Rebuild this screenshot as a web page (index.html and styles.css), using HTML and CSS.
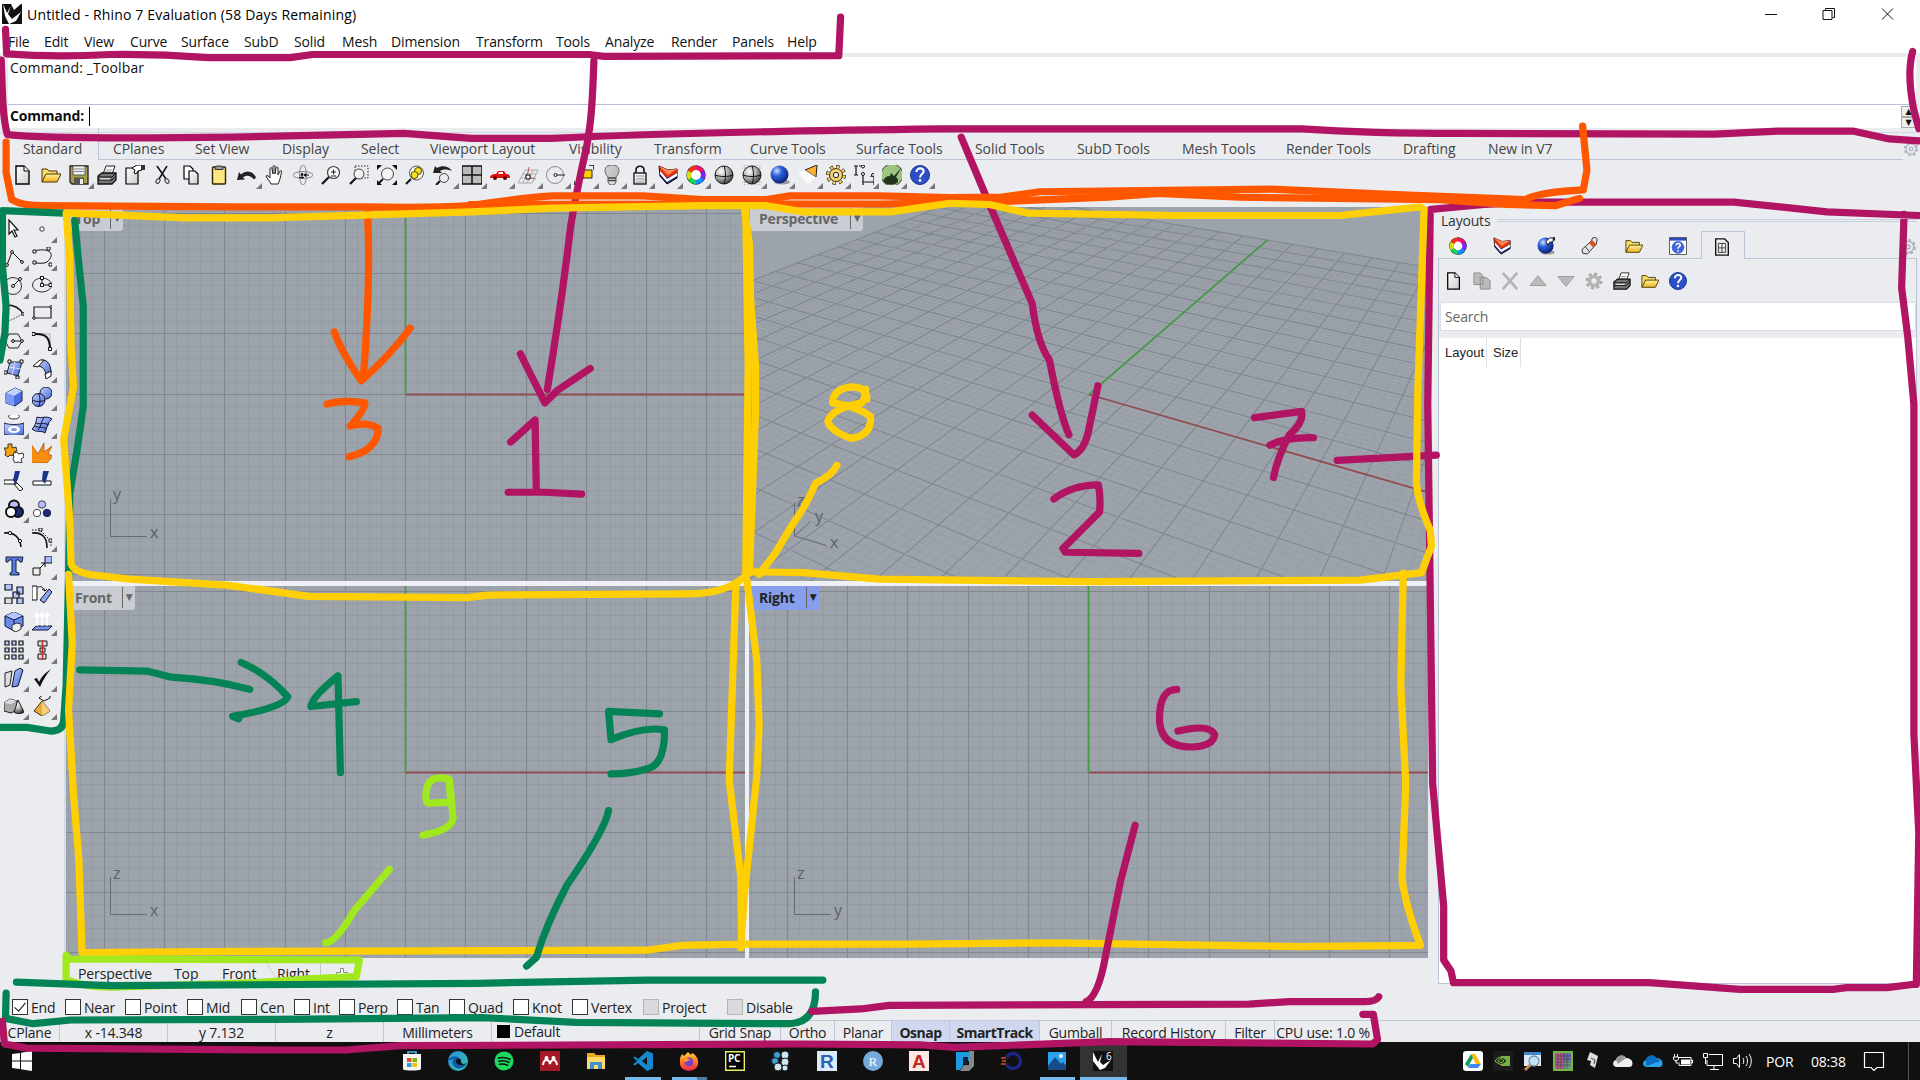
FILE: index.html
```html
<!DOCTYPE html>
<html lang="en">
<head>
<meta charset="utf-8">
<title>Untitled - Rhino 7 Evaluation</title>
<link rel="stylesheet" href="styles.css">
</head>
<body>
<svg class="defs" width="0" height="0">
<defs>
<linearGradient id="gy" x1="0" y1="0" x2="0" y2="1"><stop offset="0" stop-color="#fff0a0"/><stop offset="1" stop-color="#f0b020"/></linearGradient>
<linearGradient id="gb" x1="0" y1="0" x2="1" y2="1"><stop offset="0" stop-color="#c3d2ff"/><stop offset="1" stop-color="#4668d8"/></linearGradient>
<linearGradient id="gw" x1="0" y1="0" x2="1" y2="1"><stop offset="0" stop-color="#fff"/><stop offset="1" stop-color="#ccc"/></linearGradient>
<radialGradient id="gs" cx=".35" cy=".3" r=".8"><stop offset="0" stop-color="#fff"/><stop offset=".5" stop-color="#aaa"/><stop offset="1" stop-color="#222"/></radialGradient>
<radialGradient id="gbl" cx=".35" cy=".3" r=".8"><stop offset="0" stop-color="#cfe0ff"/><stop offset=".35" stop-color="#2f62dd"/><stop offset="1" stop-color="#04145e"/></radialGradient>
<linearGradient id="ff" x1="0" y1="0" x2="0" y2="1"><stop offset="0" stop-color="#ffd33c"/><stop offset=".5" stop-color="#ff7a1e"/><stop offset="1" stop-color="#f0254e"/></linearGradient>
<linearGradient id="edge" x1="0" y1="0" x2="1" y2="1"><stop offset="0" stop-color="#2b8de0"/><stop offset="1" stop-color="#35c7a5"/></linearGradient>
</defs>
<symbol id="new" viewBox="0 0 20 20"><path d="M3 1h8l5 5v13H3z" fill="url(#gw)" stroke="#000" stroke-width="1.4"/><path d="M11 1v5h5" fill="#fff" stroke="#000"/></symbol>
<symbol id="open" viewBox="0 0 20 20"><path d="M1 17V4h5l2 2h8v3" fill="#f6dc6a" stroke="#4a3500"/><path d="M1 17l4-8h15l-4 8z" fill="url(#gy)" stroke="#4a3500"/></symbol>
<symbol id="save" viewBox="0 0 20 20"><path d="M1 1h18v18H3l-2-2z" fill="#aba04a" stroke="#222" stroke-width="1.3"/><path d="M4 1h12v9H4z" fill="#eef0f2" stroke="#444" stroke-width=".8"/><path d="M5 4h10M5 6.500h10" stroke="#889"/><path d="M5 12.500h10V19H5z" fill="#555"/><path d="M11 14h3v5h-3z" fill="#eee"/></symbol>
<symbol id="print" viewBox="0 0 20 20"><path d="M6 9l3-8h9l-3 8z" fill="#fff" stroke="#222"/><path d="M9 5h6M8 7h6" stroke="#999"/><path d="M1 11l4-3h14v7l-4 4H1z" fill="#777" stroke="#111" stroke-width="1.300"/><path d="M1 12h14l4-4M1 15h14l4-4" stroke="#111" fill="none"/><path d="M3 13h10v1.500H3z" fill="#ddd"/></symbol>
<symbol id="note" viewBox="0 0 20 20"><path d="M1 3h12v16H1z" fill="url(#gw)" stroke="#000" stroke-width="1.200"/><path d="M7 3l5-3h5v5l-4 1-2 3-2-1 1-3z" fill="#fff" stroke="#000"/><path d="M16-1h4v6h-4z" fill="#333"/></symbol>
<symbol id="cut" viewBox="0 0 20 20"><path d="M4 1l9 13M14 1L6 14" stroke="#111" stroke-width="1.500"/><ellipse cx="5" cy="16" rx="1.800" ry="2.500" transform="rotate(35 5 16)" fill="none" stroke="#333"/><ellipse cx="14" cy="16" rx="1.800" ry="2.500" transform="rotate(-35 14 16)" fill="none" stroke="#333"/></symbol>
<symbol id="copy" viewBox="0 0 20 20"><path d="M3 1h6l3 3v10H3z" fill="#fff" stroke="#000" stroke-width="1.200"/><path d="M8 6h6l3 3v10H8z" fill="url(#gw)" stroke="#000" stroke-width="1.200"/></symbol>
<symbol id="paste" viewBox="0 0 20 20"><rect x="3.500" y="2" width="13" height="17" rx="1" fill="#ffe680" stroke="#2b2400" stroke-width="1.400"/><path d="M6 4.500V2l2-1h4l2 1v2.500z" fill="#999" stroke="#333"/></symbol>
<symbol id="undo" viewBox="0 0 20 20"><path d="M0 15l2-8 2 2.500c5-5 12-4 15 3l-2 2c-3-4-8-5-11-2l2 2z" fill="#222"/></symbol>
<symbol id="hand" viewBox="0 0 20 20"><path d="M6 19c-1-3-4-5-5-8 1-1 3 0 4 2V4c0-2 2-2 2 0l1 5V2c0-2 2-2 2 0v7l1-6c0-2 2-1 2 0v7l2-4c1-1 2 0 1.500 1-1 5-1.500 8-3.500 12z" fill="#fff" stroke="#222"/></symbol>
<symbol id="rot" viewBox="0 0 20 20"><ellipse cx="10" cy="10" rx="10" ry="3.500" fill="none" stroke="#888"/><ellipse cx="10" cy="10" rx="3.500" ry="10" fill="none" stroke="#888"/><path d="M9 8v6M6 12.500h5M12 10h4" stroke="#111"/><path d="M11 10.500l-2-3-2 3zM13 8v4l-3-2z" fill="#111"/></symbol>
<symbol id="zoom" viewBox="0 0 20 20"><circle cx="12.500" cy="7.500" r="6" fill="#f7f7f7" stroke="#444" stroke-width="1.200"/><path d="M8 12l-7 7" stroke="#111" stroke-width="2.200"/><path d="M10 7h5M12.500 4.500v5M10 11h5" stroke="#222"/></symbol>
<symbol id="zoomw" viewBox="0 0 20 20"><path d="M6 1h13v12H6z" fill="none" stroke="#222" stroke-dasharray="1.500 1.500"/><circle cx="10" cy="9" r="5" fill="#f4f4f4" stroke="#444"/><path d="M7 13l-6 6" stroke="#111" stroke-width="2.200"/></symbol>
<symbol id="zoome" viewBox="0 0 20 20"><circle cx="10.500" cy="9" r="6" fill="#f4f4f4" stroke="#444"/><path d="M6 14l-4 4" stroke="#111" stroke-width="2"/><path d="M0 0h5L0 5zM20 0h-5l5 5zM0 20v-5l5 5zM20 20v-5l-5 5z" fill="#111"/></symbol>
<symbol id="zooms" viewBox="0 0 20 20"><circle cx="11.500" cy="8" r="7" fill="#f4f4f4" stroke="#555"/><path d="M6 14l-5 5" stroke="#111" stroke-width="2"/><circle cx="13" cy="6" r="3.500" fill="#f8df20" stroke="#554800"/><circle cx="9.500" cy="10" r="3.500" fill="#f8df20" stroke="#554800"/></symbol>
<symbol id="zoomu" viewBox="0 0 20 20"><circle cx="11" cy="13" r="4.500" fill="none" stroke="#444"/><path d="M7 16l-4 4" stroke="#111" stroke-width="2"/><path d="M0 8l2-7 2 2c5-3 12-2 15 3-5-2-9-2-12 0l2 2z" fill="#222"/></symbol>
<symbol id="four" viewBox="0 0 20 20"><path d="M0 1h20v18H0z" fill="#bbb" stroke="#111" stroke-width="1.500"/><path d="M10 1v18M0 10h20" stroke="#111" stroke-width="1.500"/></symbol>
<symbol id="car" viewBox="0 0 20 20"><path d="M0 13c0-3 2-4 6-4l2-3h6l2 3c3 0 4 1 4 4z" fill="#e01010"/><path d="M9 7h4v2H8z" fill="#fff"/><circle cx="5" cy="13" r="2" fill="#600"/><circle cx="15" cy="13" r="2" fill="#600"/></symbol>
<symbol id="cpl" viewBox="0 0 20 20"><path d="M7 5h13l-6 13H0zM11 5L5 18M15 5l-6 13M5 9h13M3 13h13" fill="none" stroke="#999" stroke-width=".8"/><path d="M9 12l2-10M9 12l9 2" stroke="#b66"/><path d="M8 10h4v4H8z" fill="#fff" stroke="#000"/></symbol>
<symbol id="circ" viewBox="0 0 20 20"><circle cx="9" cy="10" r="8.500" fill="none" stroke="#888"/><path d="M11 10h8" stroke="#222"/><circle cx="9.500" cy="10" r="1.500" fill="#fff" stroke="#111"/></symbol>
<symbol id="sel" viewBox="0 0 20 20"><path d="M9 5h9v8H9z" fill="#ffd000" stroke="#222"/><path d="M15 0h5v5M0 16v4h4" fill="none" stroke="#111" stroke-width="1.500"/></symbol>
<symbol id="bulb" viewBox="0 0 20 20"><path d="M10 0c9 0 8 8 4 12v5l-2 3H8l-2-3v-5C2 8 1 0 10 0z" fill="url(#gw)" stroke="#555"/><path d="M10 0c9 0 8 8 4 12H6C2 8 1 0 10 0z" fill="#999" opacity=".45"/><path d="M6 13h8M6 15.500h8" stroke="#444" stroke-width="1.400"/></symbol>
<symbol id="lock" viewBox="0 0 20 20"><path d="M6 9V5c0-5 8-5 8 0v4" fill="none" stroke="#111" stroke-width="1.600"/><rect x="4" y="8" width="12" height="11" fill="url(#gw)" stroke="#111" stroke-width="1.300"/><path d="M6 11h8M6 14h8M6 17h8" stroke="#999"/></symbol>
<symbol id="layer" viewBox="0 0 20 20"><path d="M1 1l9 4 9-1v9l-10 6-7-8z" fill="#122a8c" stroke="#100"/><path d="M2 5l7 9 10-6v3l-10 6-7-8z" fill="#fff"/><path d="M1 1l9 4 9-1v4l-10 5-7-7z" fill="#e8320e"/><path d="M1 1l9 4 9-1-9 6z" fill="#ff8a5c"/></symbol>
<symbol id="wheel" viewBox="0 0 20 20"><circle cx="10" cy="10" r="9.700" fill="#222"/><g fill="none" stroke-width="4.500"><path d="M10 3a7 7 0 0 1 6 3.500" stroke="#f81070"/><path d="M16 6.500a7 7 0 0 1 0 7" stroke="#8020ff"/><path d="M16 13.500a7 7 0 0 1-6 3.500" stroke="#1090ff"/><path d="M10 17a7 7 0 0 1-6-3.500" stroke="#10d850"/><path d="M4 13.500a7 7 0 0 1 0-7" stroke="#d8e010"/><path d="M4 6.500a7 7 0 0 1 6-3.500" stroke="#ff3010"/></g><circle cx="10" cy="10" r="4.900" fill="#fff"/></symbol>
<symbol id="ball" viewBox="0 0 20 20"><circle cx="10" cy="10" r="9" fill="url(#gs)" stroke="#222"/><path d="M1 10c5 2 13 2 18 0M10 1c2 5 2 13 0 18" stroke="#111" fill="none"/></symbol>
<symbol id="ballg" viewBox="0 0 20 20"><path d="M-1 0h22M-1 3h22M-1 17h22M-1 20h22" stroke="#aaa" stroke-width="1.500" stroke-dasharray="1.500 1.500"/><use href="#ball"/></symbol>
<symbol id="bball" viewBox="0 0 20 20"><ellipse cx="12" cy="17" rx="8" ry="2.500" fill="#999"/><circle cx="9.500" cy="9.500" r="9" fill="url(#gbl)"/></symbol>
<symbol id="bbrush" viewBox="0 0 20 20"><use href="#bball"/><path d="M10 5l4-4h4v4l-4 1-2 3z" fill="#fff" stroke="#111"/><path d="M18-1h3v5h-3z" fill="#222"/></symbol>
<symbol id="spot" viewBox="0 0 20 20"><path d="M7 5L19 0l-1 12z" fill="#ffb030" stroke="#222"/><path d="M0 8l7-3 11 7-8 8z" fill="#fff" opacity=".75"/></symbol>
<symbol id="gear" viewBox="0 0 20 20"><circle cx="10" cy="10" r="8" fill="none" stroke="#3a2a00" stroke-width="4" stroke-dasharray="3.300 2.980"/><circle cx="10" cy="10" r="6.500" fill="#f3d377" stroke="#3a2a00"/><circle cx="10" cy="10" r="8" fill="none" stroke="#f3d377" stroke-width="2.500" stroke-dasharray="2.300 3.980" stroke-dashoffset="-.5"/><circle cx="10" cy="10" r="2.700" fill="#eee" stroke="#222"/></symbol>
<symbol id="dim" viewBox="0 0 20 20"><path d="M2 1v9M0 1h4M0 10h4M5 1h6M17 11v1M9 9v11M9 17h11M20 12v8" fill="none" stroke="#111" stroke-width="1.200"/><circle cx="9" cy="1.500" r="1.500" fill="#fff" stroke="#111"/><circle cx="9" cy="9" r="1.500" fill="#fff" stroke="#111"/><circle cx="19" cy="10" r="1.500" fill="#fff" stroke="#111"/></symbol>
<symbol id="gh" viewBox="0 0 20 20"><circle cx="10" cy="10" r="11" fill="#9cc482" stroke="#444"/><path d="M1 16c2-4 4-5 7-5l1-3 3 3 8-9-6 10c2 2 3 4 1 6-5 3-11 2-14-2z" fill="#24351d"/></symbol>
<symbol id="help" viewBox="0 0 20 20"><circle cx="10" cy="10" r="9.500" fill="#2c50c4" stroke="#1b348d"/><path d="M6.500 7c0-5 8-4.500 7 0-.5 2-3.500 2.500-3.500 5.500" fill="none" stroke="#fff" stroke-width="2.200"/><circle cx="10" cy="15.500" r="1.400" fill="#fff"/></symbol>
<symbol id="cog" viewBox="0 0 20 20"><circle cx="10" cy="10" r="8" fill="none" stroke="#aaa" stroke-width="3" stroke-dasharray="3.300 2.980"/><circle cx="10" cy="10" r="5" fill="none" stroke="#b4b4b4" stroke-width="4"/></symbol>
<symbol id="cogl" viewBox="0 0 20 20"><circle cx="10" cy="10" r="8" fill="none" stroke="#aab0bd" stroke-width="2" stroke-dasharray="3.300 2.980"/><circle cx="10" cy="10" r="6.300" fill="none" stroke="#aab0bd" stroke-width="1.500"/><circle cx="10" cy="10" r="2.200" fill="none" stroke="#aab0bd" stroke-width="1.500"/></symbol>
<symbol id="brush" viewBox="0 0 20 20"><path d="M2 18l-1-4 10-9 2-4c3-1 5 0 5 2l-1 5-10 11z" fill="#e4e4e4" stroke="#222"/><path d="M9 7l5 5 3-4-5-5z" fill="#d9501c"/><path d="M5 11l4 5" stroke="#333"/></symbol>
<symbol id="hwin" viewBox="0 0 20 20"><path d="M.5.500h19v19H.5z" fill="#fff" stroke="#444"/><path d="M1 1h18v3H1z" fill="#2a4bb8"/><circle cx="10" cy="11.500" r="7" fill="#4166d8"/><path d="M8 9.500c0-3 5-3 4.500 0-.5 1-2.500 1.500-2.500 3.500" fill="none" stroke="#fff" stroke-width="1.700"/><circle cx="10" cy="15.500" r="1" fill="#fff"/></symbol>
<symbol id="lay" viewBox="0 0 20 20"><path d="M3 1h10l4 4v14H3z" fill="#eee" stroke="#111" stroke-width="1.500"/><path d="M6 6h8v10H6zM10 6v10M6 11h8" fill="none" stroke="#333"/></symbol>
<symbol id="gcopy" viewBox="0 0 20 20"><path d="M1 1h7l3 3v10H1zM8 6h7l4 4v9H8z" fill="#bbb" stroke="#888"/></symbol>
<symbol id="gx" viewBox="0 0 20 20"><path d="M2 1l16 18M18 1L2 19" stroke="#b4b4b4" stroke-width="3"/></symbol>
<symbol id="gup" viewBox="0 0 20 20"><path d="M1 15L10 4l9 11z" fill="#bbb" stroke="#999"/></symbol>
<symbol id="gdn" viewBox="0 0 20 20"><path d="M1 5l9 11 9-11z" fill="#bbb" stroke="#999"/></symbol>
<symbol id="arrow" viewBox="0 0 20 20"><path d="M5 1v14l3-3 3 6 2-1-3-6h4z" fill="#fff" stroke="#111" stroke-width="1.200"/></symbol>
<symbol id="pt" viewBox="0 0 20 20"><circle cx="10" cy="10" r="2.200" fill="#fff" stroke="#333"/></symbol>
<symbol id="pl" viewBox="0 0 20 20"><path d="M3 18L8 5l10 10" fill="none" stroke="#111"/><g fill="#fff" stroke="#111"><circle cx="3" cy="18" r="1.400"/><circle cx="8" cy="5" r="1.400"/><circle cx="18" cy="15" r="1.400"/></g></symbol>
<symbol id="crv" viewBox="0 0 20 20"><path d="M2 4c16-4 22 3 13 11-3 2-8 1-13 1" fill="none" stroke="#111"/><path d="M1 3h3v3H1zM1 14h3v3H1zM15 0h3v3h-3zM17 16h3v3h-3z" fill="#fff" stroke="#111"/></symbol>
<symbol id="ci" viewBox="0 0 20 20"><circle cx="9" cy="11" r="8.500" fill="none" stroke="#333"/><path d="M9 11l7-7" stroke="#111"/><circle cx="9" cy="11" r="1.500" fill="#fff" stroke="#111"/><circle cx="16" cy="4" r="1.500" fill="#fff" stroke="#111"/></symbol>
<symbol id="el" viewBox="0 0 20 20"><ellipse cx="10" cy="10" rx="9.500" ry="7" fill="none" stroke="#333"/><path d="M10 3v7h9" fill="none" stroke="#111"/><path d="M8.500 1.500h3v3h-3zM8.500 8.500h3v3h-3zM17 8.500h3v3h-3z" fill="#fff" stroke="#111"/></symbol>
<symbol id="ar" viewBox="0 0 20 20"><path d="M2 2c8 0 14 3 17 9" fill="none" stroke="#111" stroke-width="1.300"/><path d="M19 11L3 19" stroke="#555" stroke-dasharray="2 1"/><circle cx="3" cy="19" r="1.300"/><circle cx="19" cy="11" r="1.400" fill="#fff" stroke="#111"/></symbol>
<symbol id="re" viewBox="0 0 20 20"><path d="M2 4h17v11H2z" fill="none" stroke="#222" stroke-width="1.200"/><circle cx="2" cy="15" r="1.300" fill="#fff" stroke="#111"/><circle cx="19" cy="4" r="1.300" fill="#fff" stroke="#111"/></symbol>
<symbol id="po" viewBox="0 0 20 20"><path d="M1 10l4-7h9l4 7-4 7H5z" fill="none" stroke="#222"/><path d="M10 10h8" stroke="#111"/><circle cx="9" cy="10" r="1.400" fill="#fff" stroke="#111"/><circle cx="18" cy="10" r="1.400" fill="#fff" stroke="#111"/></symbol>
<symbol id="fi" viewBox="0 0 20 20"><path d="M2 3h16v15" fill="none" stroke="#aaa"/><path d="M2 3c12-1 16 4 16 15" fill="none" stroke="#111" stroke-width="2"/><path d="M0 1.500h3v3H0zM16.500 16.500h3v3h-3z" fill="#fff" stroke="#111"/></symbol>
<symbol id="su" viewBox="0 0 20 20"><path d="M6 3h12l-4 14L3 14z" fill="url(#gb)" stroke="#223"/><path d="M11 3L8 16M5 8l12 2" stroke="#dde"/><path d="M4 1h3v3H4zM16 1h3v3h-3zM0 12h3v3H0zM12 17h3v3h-3z" fill="#fff" stroke="#111"/></symbol>
<symbol id="sw" viewBox="0 0 20 20"><path d="M5 7l5-6c6 0 9 5 9 13l-5 4c0-7-3-11-9-11z" fill="url(#gb)" stroke="#111"/><path d="M1 7l7-6h4L6 8zM13 15l6-3v5l-5 3z" fill="#fff" stroke="#111"/></symbol>
<symbol id="box" viewBox="0 0 20 20"><path d="M2 6l9-5 7 3v10l-7 5-9-3z" fill="#4b6ee0" stroke="#224"/><path d="M2 6l9-5 7 3-8 5z" fill="#c4d2ff"/><path d="M2 6l8 3v10l-8-3z" fill="#7f9cf5"/></symbol>
<symbol id="sp2" viewBox="0 0 20 20"><circle cx="14" cy="6" r="6" fill="url(#gb)" stroke="#113"/><circle cx="6.500" cy="13" r="6.500" fill="url(#gb)" stroke="#113"/><path d="M0 13c4 2 9 2 13 0M6.500 6.500c2 4 2 9 0 13" fill="none" stroke="#113"/></symbol>
<symbol id="cy" viewBox="0 0 20 20"><ellipse cx="10" cy="1.500" rx="5.500" ry="2.500" fill="#fff" stroke="#333"/><path d="M0 8c5 2 15 2 20 0v11c-6 2-14 2-20 0z" fill="url(#gb)" stroke="#224"/><ellipse cx="10" cy="14.500" rx="6" ry="3.500" fill="#fff"/><ellipse cx="10" cy="14.500" rx="3" ry="1.600" fill="#7b98ee"/></symbol>
<symbol id="me" viewBox="0 0 20 20"><path d="M0 14c3-2 4-7 5-12 5 2 9-2 15 2-4 3-5 8-7 14-4-3-8 0-13-4z" fill="url(#gb)" stroke="#113"/><path d="M4 8c4 2 8-1 13 2M12 2c-3 5-3 10-6 13M2 11c4 2 8 0 13 3" stroke="#113" fill="none"/></symbol>
<symbol id="puz" viewBox="0 0 20 20"><path d="M0 5l4 0 0-4 4 0 0 4 4-1 1 4-3 1 0 4-4-1-2 2-3-2 1-3z" fill="#f7a410" stroke="#432"/><path d="M9 11l3-2 3 2 4-1 1 4-3 2 1 4-4-1-3 1-2-4 1-2z" fill="#fff" stroke="#333"/></symbol>
<symbol id="exp" viewBox="0 0 20 20"><path d="M-1 1l7 10 6-11 0 9 8-6-4 8 5 2-6 7H-1V10z" fill="#f98d10" stroke="#a04c00" stroke-width=".7"/></symbol>
<symbol id="tr" viewBox="0 0 20 20"><path d="M0 9h12v4H0zM13 12l6 6-3 2-6-7z" fill="#fff" stroke="#111"/><path d="M11 0h5l-2 8-3 5-2-4z" fill="#1b3488"/></symbol>
<symbol id="sl" viewBox="0 0 20 20"><path d="M1 10h18v4H1z" fill="#fff" stroke="#111"/><path d="M11 0h6l-4 13-3-4z" fill="#1b3488"/></symbol>
<symbol id="gr" viewBox="0 0 20 20"><circle cx="10" cy="6.500" r="5" fill="#b8c0f5" stroke="#111" stroke-width="2"/><circle cx="14" cy="13" r="5" fill="#1b2a80" stroke="#111" stroke-width="2"/><circle cx="7" cy="13" r="5" fill="#fff" stroke="#111" stroke-width="2"/></symbol>
<symbol id="ug" viewBox="0 0 20 20"><circle cx="10" cy="5.500" r="3.700" fill="#b8b8ff" stroke="#445"/><circle cx="5" cy="14" r="3.700" fill="#fff" stroke="#445"/><circle cx="15" cy="14" r="3.700" fill="#1b2a80" stroke="#224"/></symbol>
<symbol id="pe" viewBox="0 0 20 20"><path d="M0 5c10-1 16 4 17 14" fill="none" stroke="#111" stroke-width="1.600"/><circle cx="6" cy="5" r="1.600" fill="#fff" stroke="#111"/><circle cx="16" cy="13" r="1.600" fill="#fff" stroke="#111"/></symbol>
<symbol id="ce" viewBox="0 0 20 20"><path d="M0 5c10-1 15 4 15 15" fill="none" stroke="#111" stroke-width="1.600"/><path d="M0 2h8l11 11v6" fill="none" stroke="#111" stroke-dasharray="1.500 1.500"/><path d="M7 0h3v3H7zM17 11h3v3h-3z" fill="#fff" stroke="#111"/></symbol>
<symbol id="tx" viewBox="0 0 20 20"><path d="M2 1h17l-1 5h-2l-1-2h-3v12l3 1v2H6v-2l2-1V4H5L4 6H2z" fill="#5a7be0" stroke="#123"/></symbol>
<symbol id="mv" viewBox="0 0 20 20"><path d="M13 0h7v7h-7z" fill="#a7b9ff" stroke="#111"/><path d="M1 12h7v7H1z" fill="#eee" stroke="#111"/><path d="M8 12l5-5m-4 0h4v4" stroke="#111" fill="none"/></symbol>
<symbol id="cp" viewBox="0 0 20 20"><g fill="#b4c4ff" stroke="#111" stroke-width="1.200"><path d="M1 0h7v6H1zM13 3h6v7h-6zM9 8h6v6H9zM13 14h6v6h-6z"/><path d="M1 14h7v6H1z" fill="#ddd"/></g></symbol>
<symbol id="ro" viewBox="0 0 20 20"><path d="M0 2h5v14H0z" fill="#fff" stroke="#111"/><path d="M8 16L17 5l3 3-8 11z" fill="#8ba4f6" stroke="#111"/><path d="M6 3c4-1 6 1 7 4l2-2m-5 0l3 2" fill="none" stroke="#111"/></symbol>
<symbol id="bo" viewBox="0 0 20 20"><path d="M1 4l9-4 9 4v10l-9 5-9-5z" fill="#6a8cf0" stroke="#113"/><path d="M1 4l9-4 9 4-9 4z" fill="#b4c6ff"/><path d="M1 4l9 4 9-4M10 8v11" fill="none" stroke="#113"/><path d="M8 13l5-2 4 1v5l-5 3-4-2z" fill="#eee" stroke="#333"/></symbol>
<symbol id="ex" viewBox="0 0 20 20"><path d="M0 18l4-4h16l-4 4z" fill="#7b98ee" stroke="#113"/><path d="M5 14V2M10 14V2M15 14V2M3 4l2-3 2 3zM8 4l2-3 2 3zM13 4l2-3 2 3z" stroke="#fff" stroke-width="1.500" fill="#fff"/></symbol>
<symbol id="arr" viewBox="0 0 20 20"><g fill="#c4ceff" stroke="#111" stroke-width="1.200"><path d="M1 1h4v4H1zM8 1h4v4H8zM15 1h4v4h-4zM1 8h4v4H1zM8 8h4v4H8zM15 8h4v4h-4zM8 15h4v4H8zM15 15h4v4h-4z"/><path d="M1 15h4v4H1z" fill="#fff"/></g></symbol>
<symbol id="al" viewBox="0 0 20 20"><path d="M6 1h9v5H6zM8 8h5v4H8zM6 14h8v5H6z" fill="#ddd" stroke="#111"/><path d="M10.500 0v20" stroke="#c03030" stroke-width="1.500"/></symbol>
<symbol id="sc" viewBox="0 0 20 20"><path d="M1 5l7-2-2 14-5 2z" fill="#ddd" stroke="#222"/><path d="M11 3l5-3 3 2-5 16-6 1z" fill="url(#gb)" stroke="#113"/></symbol>
<symbol id="ck" viewBox="0 0 20 20"><path d="M2 11l3-1 2 4c3-6 6-9 12-13C14 7 11 12 8 19z" fill="#111"/></symbol>
<symbol id="bx" viewBox="0 0 20 20"><path d="M0 7l6-4 7 2v9l-6 3-7-2z" fill="#aaa" stroke="#222"/><path d="M0 7l6-4 7 2-6 3z" fill="#ddd"/><path d="M14 4l6 12c-2 2-8 2-10 0z" fill="url(#gs)" stroke="#222"/></symbol>
<symbol id="py" viewBox="0 0 20 20"><path d="M2 15l8-10 8 10-8 5z" fill="#eca83a" stroke="#431"/><path d="M10 5v15l8-5z" fill="#f6cf75"/><path d="M7 2l5-4h6v4l-6 3z" fill="#eee" stroke="#111"/></symbol>
</svg>

<header class="title">
 <svg class="logo" viewBox="0 0 20 20"><path d="M0 0h20v20H0z" fill="#111"/><path d="M1 0l4 9 4-7-3 8 4 5 9-7-5 9-7 3-4-8zM9 0l3 6 7-6z" fill="#fff"/></svg>
 <span class="cap">Untitled - Rhino 7 Evaluation (58 Days Remaining)</span>
 <svg class="wc" viewBox="0 0 160 28"><path d="M16 14.500h12M74 10.500h9v9h-9zM76.500 10.500v-2h9v9h-2M133 8.500l11 11M144 8.500l-11 11" fill="none" stroke="#111"/></svg>
</header>
<nav class="menu"><a>File</a><a>Edit</a><a>View</a><a>Curve</a><a>Surface</a><a>SubD</a><a>Solid</a><a>Mesh</a><a>Dimension</a><a>Transform</a><a>Tools</a><a>Analyze</a><a>Render</a><a>Panels</a><a>Help</a></nav>
<section class="cmd">
 <div class="hist">Command: _Toolbar</div>
 <div class="prompt"><b>Command:</b><i class="caret"></i><span class="spin"><i>▲</i><i>▼</i></span></div>
</section>
<nav class="tabs"><a class="on">Standard</a><a>CPlanes</a><a>Set View</a><a>Display</a><a>Select</a><a>Viewport Layout</a><a>Visibility</a><a>Transform</a><a>Curve Tools</a><a>Surface Tools</a><a>Solid Tools</a><a>SubD Tools</a><a>Mesh Tools</a><a>Render Tools</a><a>Drafting</a><a>New in V7</a><svg class="tg"><use href="#cogl"/></svg></nav>
<div class="bar">
<i><svg><use href="#new"/></svg></i><i><svg><use href="#open"/></svg></i><i class="m"><svg><use href="#save"/></svg></i><i><svg><use href="#print"/></svg></i><i><svg><use href="#note"/></svg></i><i><svg><use href="#cut"/></svg></i><i><svg><use href="#copy"/></svg></i><i><svg><use href="#paste"/></svg></i><i class="m"><svg><use href="#undo"/></svg></i><i><svg><use href="#hand"/></svg></i><i><svg><use href="#rot"/></svg></i><i><svg><use href="#zoom"/></svg></i><i><svg><use href="#zoomw"/></svg></i><i><svg><use href="#zoome"/></svg></i><i><svg><use href="#zooms"/></svg></i><i class="m"><svg><use href="#zoomu"/></svg></i><i class="m"><svg><use href="#four"/></svg></i><i class="m"><svg><use href="#car"/></svg></i><i class="m"><svg><use href="#cpl"/></svg></i><i class="m"><svg><use href="#circ"/></svg></i><i class="m"><svg><use href="#sel"/></svg></i><i class="m"><svg><use href="#bulb"/></svg></i><i class="m"><svg><use href="#lock"/></svg></i><i class="m"><svg><use href="#layer"/></svg></i><i class="m"><svg><use href="#wheel"/></svg></i><i><svg><use href="#ball"/></svg></i><i class="m"><svg><use href="#ballg"/></svg></i><i class="m"><svg><use href="#bball"/></svg></i><i class="m"><svg><use href="#spot"/></svg></i><i class="m"><svg><use href="#gear"/></svg></i><i class="m"><svg><use href="#dim"/></svg></i><i class="m"><svg><use href="#gh"/></svg></i><i class="m"><svg><use href="#help"/></svg></i>
</div>
<main class="work">
 <aside class="side">
<i><svg><use href="#arrow"/></svg></i><i class="m"><svg><use href="#pt"/></svg></i><i class="m"><svg><use href="#pl"/></svg></i><i class="m"><svg><use href="#crv"/></svg></i><i class="m"><svg><use href="#ci"/></svg></i><i class="m"><svg><use href="#el"/></svg></i><i class="m"><svg><use href="#ar"/></svg></i><i class="m"><svg><use href="#re"/></svg></i><i class="m"><svg><use href="#po"/></svg></i><i class="m"><svg><use href="#fi"/></svg></i><i class="m"><svg><use href="#su"/></svg></i><i class="m"><svg><use href="#sw"/></svg></i><i class="m"><svg><use href="#box"/></svg></i><i class="m"><svg><use href="#sp2"/></svg></i><i class="m"><svg><use href="#cy"/></svg></i><i class="m"><svg><use href="#me"/></svg></i><i><svg><use href="#puz"/></svg></i><i><svg><use href="#exp"/></svg></i><i><svg><use href="#tr"/></svg></i><i><svg><use href="#sl"/></svg></i><i class="m"><svg><use href="#gr"/></svg></i><i><svg><use href="#ug"/></svg></i><i><svg><use href="#pe"/></svg></i><i class="m"><svg><use href="#ce"/></svg></i><i><svg><use href="#tx"/></svg></i><i class="m"><svg><use href="#mv"/></svg></i><i><svg><use href="#cp"/></svg></i><i><svg><use href="#ro"/></svg></i><i class="m"><svg><use href="#bo"/></svg></i><i class="m"><svg><use href="#ex"/></svg></i><i class="m"><svg><use href="#arr"/></svg></i><i class="m"><svg><use href="#al"/></svg></i><i class="m"><svg><use href="#sc"/></svg></i><i class="m"><svg><use href="#ck"/></svg></i><i class="m"><svg><use href="#bx"/></svg></i><i class="m"><svg><use href="#py"/></svg></i>
 </aside>
 <div class="mid">
 <section class="views">
  <div class="vp"><svg class="grid" viewBox="66 207 679 374" data-ox="405" data-oy="393.700"></svg><svg class="mark" viewBox="66 207 679 374"><path d="M110.500 499v37.500H147"/><text x="113" y="500">y</text><text x="150" y="538">x</text></svg><span class="lab top">Top<i>▼</i></span></div>
  <div class="vp"><svg class="grid persp" viewBox="749 207 679 374"></svg><svg class="mark" viewBox="749 207 679 374"><path d="M794.500 503v33l16-14.500M794.500 536l32 9.500"/><text x="797" y="506">z</text><text x="815" y="522">y</text><text x="830" y="548">x</text></svg><span class="lab p persp-lab">Perspective<i>▼</i></span></div>
  <div class="vp"><svg class="grid" viewBox="66 586 679 372" data-ox="405" data-oy="771.700"></svg><svg class="mark" viewBox="66 586 679 372"><path d="M110.500 877v37.500H147"/><text x="113" y="879">z</text><text x="150" y="916">x</text></svg><span class="lab front">Front<i>▼</i></span></div>
  <div class="vp"><svg class="grid" viewBox="749 586 679 372" data-ox="1088" data-oy="771.700"></svg><svg class="mark" viewBox="749 586 679 372"><path d="M794.500 877v37.500H831"/><text x="797" y="879">z</text><text x="834" y="916">y</text></svg><span class="lab act p">Right<i>▼</i></span></div>
 </section>
 <nav class="vtabs"><a>Perspective</a><a>Top</a><a>Front</a><svg class="sl" viewBox="0 0 16 24"><path d="M1 0l14 24" stroke="#c0c6d4"/></svg><a>Right</a><a class="plus"><svg viewBox="0 0 12 12"><path d="M4.500.500h3v4h4v3h-4v4h-3v-4h-4v-3h4z" fill="#fff" stroke="#888"/></svg></a></nav>
 </div>
 <section class="panel">
  <div class="ph"><span>Layouts</span><i></i></div>
  <div class="pt"><b><svg><use href="#wheel"/></svg></b><b><svg><use href="#layer"/></svg></b><b><svg><use href="#bbrush"/></svg></b><b><svg><use href="#brush"/></svg></b><b><svg><use href="#open"/></svg></b><b><svg><use href="#hwin"/></svg></b><b class="on"><svg><use href="#lay"/></svg></b><svg class="pg"><use href="#cogl"/></svg></div>
  <div class="pb">
   <div class="tools"><svg><use href="#new"/></svg><svg><use href="#gcopy"/></svg><svg><use href="#gx"/></svg><svg><use href="#gup"/></svg><svg><use href="#gdn"/></svg><svg><use href="#cog"/></svg><svg><use href="#print"/></svg><svg><use href="#open"/></svg><svg><use href="#help"/></svg></div>
   <div class="search">Search</div>
   <div class="list"><span class="c1">Layout</span><span class="c2">Size</span></div>
  </div>
 </section>
</main>
<div class="osnap"><label><i class="ok"></i>End</label><label><i></i>Near</label><label><i></i>Point</label><label><i></i>Mid</label><label><i></i>Cen</label><label><i></i>Int</label><label><i></i>Perp</label><label><i></i>Tan</label><label><i></i>Quad</label><label><i></i>Knot</label><label><i></i>Vertex</label><label><i class="dis"></i>Project</label><label><i class="dis"></i>Disable</label></div>
<footer class="status"><span>CPlane</span><span>x -14.348</span><span>y 7.132</span><span>z</span><span>Millimeters</span><span class="def"><i></i>Default</span><span>Grid Snap</span><span>Ortho</span><span>Planar</span><span class="hi">Osnap</span><span class="hi">SmartTrack</span><span>Gumball</span><span>Record History</span><span>Filter</span><span class="cpu">CPU use: 1.0 %</span></footer>
<div class="task">
 <svg class="start" viewBox="0 0 20 20"><path d="M0 3l8-1v7.500H0zM9 1.800L20 0v9.500H9zM0 10.500h8V18l-8-1zM9 10.500h11V20L9 18.200z" fill="#fff"/></svg>
 <div class="apps">
 <i><svg viewBox="0 0 20 20"><path d="M1 3h18v15c0 2-18 2-18 0z" fill="#f5f5f5"/><path d="M6 3V1h8v2" fill="none" stroke="#4db6f0" stroke-width="1.500"/><path d="M5 7h4.500v4H5z" fill="#e84a26"/><path d="M10.500 7H15v4h-4.500z" fill="#7db700"/><path d="M5 12h4.500v4H5z" fill="#1ba0e8"/><path d="M10.500 12H15v4h-4.500z" fill="#fdb900"/></svg></i>
 <i><svg viewBox="0 0 20 20"><circle cx="10" cy="10" r="10" fill="url(#edge)"/><path d="M0 10c2-6 13-6 13 1 0 3 4 3 6 1-2 5-8 7-12 4-4-3-3-7 0-9" fill="#0d58a8"/><path d="M8 10c0-3 5-3 5 0s2 4 6 2c-3 3-11 3-11-2z" fill="#101010"/></svg></i>
 <i><svg viewBox="0 0 20 20"><circle cx="10" cy="10" r="9.500" fill="#1ed760"/><path d="M4.500 7c4-1 8-.5 11.500 1.300M5 10.300c3.500-1 7-.5 9.800 1M5.500 13.300c3-.8 5.500-.3 8 1" fill="none" stroke="#111" stroke-width="1.600" stroke-linecap="round"/></svg></i>
 <i><svg viewBox="0 0 20 20"><path d="M0 0h20v20H0z" fill="#a51827"/><circle cx="6.500" cy="7" r="2" fill="#fff"/><circle cx="13.500" cy="7" r="2" fill="#fff"/><path d="M3 14c1-7 6-6 7-1 1-5 6-6 7 1" fill="none" stroke="#fff" stroke-width="2"/></svg></i>
 <i><svg viewBox="0 0 20 20"><path d="M1 2h7l2 2h9v14H1z" fill="#e9a820"/><path d="M1 6h18v12H1z" fill="#ffd965"/><path d="M4 18v-7h12v7h-4v-4H8v4z" fill="#3f92d2"/></svg></i>
 <i class="run"><svg viewBox="0 0 20 20"><path d="M14 0l6 2.500v15L14 20 5 12l-3 2.500-2-1L4 10 0 6.500l2-1L5 8z" fill="#1588d0"/><path d="M14 6v8l-5-4z" fill="#101010"/></svg></i>
 <i class="run two"><svg viewBox="0 0 20 20"><path d="M1 7l2-4 2 2 4-4 3 3 1-2c4 2 7 6 6 11-1 9-17 9-18 0z" fill="url(#ff)"/><circle cx="10" cy="11" r="4.500" fill="#7a3fd0"/><path d="M4 8c3-2 6 0 8 1-3 0-4 2-6 2z" fill="#ff9a25"/></svg></i>
 <i><svg viewBox="0 0 20 20"><path d="M.7.700h18.600v18.600H.7z" fill="#000" stroke="#e8f060" stroke-width="1.400"/><text class="pc" x="3" y="11">PC</text><path d="M4 15.500h7" stroke="#fff" stroke-width="1.500"/></svg></i>
 <i><svg viewBox="0 0 20 20"><g fill="#cfe6f5" stroke="#222"><circle cx="6" cy="4" r="3.500" fill="#3e9fd8"/><circle cx="14" cy="4" r="4"/><circle cx="4" cy="10" r="3.500" fill="#3e9fd8"/><circle cx="14" cy="11" r="4"/><circle cx="7" cy="16" r="4"/><circle cx="14" cy="17" r="3"/></g></svg></i>
 <i><svg viewBox="0 0 20 20"><path d="M0 0h20v20H0z" fill="#dce9f8"/><text class="big r" x="3" y="17">R</text></svg></i>
 <i><svg viewBox="0 0 20 20"><circle cx="10" cy="10" r="10" fill="#75aadb"/><text class="serif" x="5.500" y="14.500">R</text></svg></i>
 <i><svg viewBox="0 0 20 20"><path d="M0 0h20v20H0z" fill="#fce8e4"/><text class="big a" x="3" y="17">A</text></svg></i>
 <i><svg viewBox="0 0 20 20"><path d="M1 1h13v9H8v5l-3 4H1z" fill="#1c9be0"/><path d="M14 0h5v15l-5 5H5l4-6h5z" fill="#888"/><path d="M8 6h5v7H8z" fill="#123"/></svg></i>
 <i><svg viewBox="0 0 20 20"><circle cx="12" cy="10" r="7.500" fill="none" stroke="#1c2580" stroke-width="3.500"/><path d="M0 6h6v8H0z" fill="#101010"/><path d="M0 7h5M1 10h4M0 13h5" stroke="#e04a2a" stroke-width="1.500"/></svg></i>
 <i class="run"><svg viewBox="0 0 20 20"><path d="M1 1h18v18H1z" fill="#2aa0ee"/><path d="M1 15l7-9 6 7 2-2 3 4v4H1z" fill="#164b86"/><circle cx="14" cy="5" r="2" fill="#fff"/></svg></i>
 <i class="run cur"><svg viewBox="0 0 20 20"><path d="M0 0h20v20H0z" fill="#111"/><path d="M0 1l5 10 4-8-2 8 3 3 8-5-6 8-5 2-7-9z" fill="#fff"/><text class="six" x="13" y="9">6</text></svg></i>
 </div>
 <div class="tray">
 <svg viewBox="0 0 20 20"><rect width="20" height="20" rx="3" fill="#fff"/><path d="M8 3h4l6 10h-5z" fill="#fbbc04"/><path d="M8 3l2 4-5 9-3-3z" fill="#0f9d58"/><path d="M7 13h11l-3 4H5z" fill="#4285f4"/></svg>
 <svg viewBox="0 0 20 20"><path d="M0 0h20v20H0z" fill="#1c1c1c"/><path d="M8 5h9v10H8z" fill="#76b043"/><path d="M2 10c3-5 9-5 12 0-4 5-8 4-12 0zM5 10c2-3 4-3 6 0-2 2-4 2-6 0z" fill="#24361a" stroke="#8ac250" stroke-width="1"/></svg>
 <svg viewBox="0 0 20 20"><path d="M1 1h17v14H1z" fill="#dfeaf5"/><path d="M1 1h17v3H1z" fill="#3e88cc"/><circle cx="11" cy="10" r="5" fill="#c0e4f7" stroke="#7893a8" stroke-width="1.300"/><path d="M7 14l-5 5" stroke="#c78a4e" stroke-width="3"/></svg>
 <svg viewBox="0 0 20 20"><path d="M1 1h18v18H1z" fill="#6c9a80" stroke="#74b840" stroke-width="2"/><path d="M2 2h8v16H2z" fill="#b45a90"/><path d="M10 2h8v8h-8z" fill="#6f6cb0"/><path d="M2 5h16M2 8h16M2 11h16M2 14h16M5 2v16M8 2v16M11 2v16M14 2v16" stroke="#333" stroke-width=".5"/></svg>
 <svg viewBox="0 0 20 20"><path d="M7 1l8 4-3 12-5-3 1-4-4-1z" fill="#ddd"/><path d="M8 7l4 2-1 4" fill="none" stroke="#444"/></svg>
 <svg viewBox="0 0 20 20"><path d="M4 16c-5 0-5-6-1-7 1-5 8-6 10-2 7-1 9 9 3 9z" fill="#eee"/><path d="M3 9c1-5 8-6 10-2l-8 6z" fill="#999"/></svg>
 <svg viewBox="0 0 20 20"><path d="M4 16c-5 0-5-6-1-7 1-5 8-6 10-2 7-1 9 9 3 9z" fill="#28a8ea"/><path d="M3 9c1-5 8-6 10-2l5 3-15 5z" fill="#0a6cc4"/></svg>
 <svg viewBox="0 0 20 20"><path d="M6 6.500h12v8H6v-3M18 9h1.500v3H18" fill="none" stroke="#fff"/><path d="M8 8.500h9v5H8z" fill="#fff"/><path d="M1.500 3v3M4.500 3v3M.500 6h5v2c0 2-5 2-5 0zM3 9v3h2" fill="none" stroke="#fff"/></svg>
 <svg viewBox="0 0 20 20"><path d="M6 3.500h13.500v11H4V9M11 15v3M7 18.500h9M.500 2.500h4v4h-4zM2.500 6v7" fill="none" stroke="#fff"/></svg>
 <svg viewBox="0 0 20 20"><path d="M.5 7.500h3l3-4v13l-3-4h-3zM10 7c1 2 1 4 0 6M13 5c2 3 2 7 0 10M16 3c3 4 3 10 0 14" fill="none" stroke="#fff"/></svg>
 <span class="lang">POR</span><span class="time">08:38</span>
 <svg class="nt" viewBox="0 0 20 20"><path d="M.5 1.500h19v15H13l-3 3-3-3H.5z" fill="none" stroke="#fff" stroke-width="1.200"/></svg><b class="desk"></b>
 </div>
</div>

<svg class="ink" viewBox="0 0 1568 882" preserveAspectRatio="none">
<g class="mg">
<path d="M4.500 24L5.400 44Q45 47 90 44.500Q130 44 170 47L237 47L255 44.500L481 44.500L493 46L685 45.500L686.500 14"/>
<path d="M485 50C484 80 483 100 479 120Q470 160 466 185Q459 245 447 318M425 289L445 329L455 319L482 301M417 361L437 343L438 402M415 402L445 402L475 403.500"/>
<path d="M1 49C2 75 2 95 6 110Q45 114 190 112L330 109L385 113L450 113Q550 108 768 105.300L1063 105.300Q1120 109 1191 109L1400 109.600L1452 107L1513 107L1543 113.500L1567 115"/>
<path d="M1562 42Q1557 60 1563 90L1567 105"/>
<path d="M785 112L810 171.500L843 248Q847 280 857 294Q866 340 873 355M843 339L877 371.500Q885 368 888.500 354L896.600 315M860.700 407.500Q876 396 897 396Q899 405 898 418Q880 436 868 448L870 451L930 452"/>
<path d="M1024.500 341L1063 336Q1065 345 1053 355Q1043 374 1040 390M1037 363.600Q1050 357 1072.700 357.500M1092 376Q1130 374 1173 371.600"/>
<path d="M1168.500 171L1212 167L1252 165L1416 165L1492 173L1567 176M1555 175L1553 235L1558 275L1563 330L1563 600L1567 680L1565 804M1168 175L1166 330L1169 560L1170 640L1179 740V784L1185 793L1187 802.500L1347 802.500L1421 808L1497 808L1508 806.600L1541 806.600L1565 803.600"/>
</g>
<g class="or">
<path d="M5 116L5 141L9.500 163Q18 168 35 168L190 169L300 169Q350 170 384 168Q430 161 452 160L525 160L574 163L626 163L645 160L718 160L776 161.400L818 161L849 156.600L1038 154.500L1140 159L1246 163Q1255 157 1293 155L1296 139L1292.500 103"/>
<path d="M384 167L623 166.600L721 166.600L816 164.700L905 161L946 158L1012 161L1176 163L1230 167L1270 168L1290 162"/>
<path d="M300 172Q303 225 297 305M273 271Q278 286 295 311Q318 291 335 268M267 330Q280 326 298 329Q298 335 286 348Q300 344 309 350Q308 368 285 373"/>
</g>
<g class="gn">
<path d="M52 174L2 172L2 218L5 250L4 272L0 294M61 180L64 212L68 250L68 332L63 367L57 403L56 471L54 560L52 588Q52 597 41 597L22 594L0 594"/>
<path d="M65 547L120 548L140 553Q175 555 204 563M197 541Q218 550 235 569Q231 578 190 585L195 587M291 573L254 577Q254 570 276 552L278 631M538.600 583L497 581L499 604Q525 593 542.700 596Q543 625 528 628Q515 632 499 632"/>
</g>
<g class="ye">
<path d="M57 174L152 178L220 178L385 173L452 170L574 168L626 168L656 173L727 173L776 166L808 167L839 174L962 176L1094 176L1160 169"/>
<path d="M54 174L57 212L58 283L60 316L52 359L54.500 392L57 425L58 460Q60 468 80 470L106 473L187 478L252 487L382 488L398 486L557 485Q592 486 608 471"/>
<path d="M608 171L612 199L613 245L617 299L617 337L612 468M609 171L611 300L609 468"/>
<path d="M614 467L656 467.700L718 473L891 475L1111 473.700L1161 467.700L1169 446L1168 433Q1158 410 1156.700 394L1158 316L1163 171"/>
<path d="M708 326Q708 316 695 316Q680 318 680 329Q700 332 711 340Q712 356 695 358Q678 352 676 344Q680 333 704 329Q708 320 707 318M683.500 380Q680 388 666 394.700Q658 414 648 427L633 452L620 469"/>
<path d="M56 469L59 525L56 580L60 648L64.400 702L67 778L195 777L528 776L557 772L605 771L740 771L860 770L1060 773L1160 772Q1148 740 1145 718L1148 640L1144 560L1146 468M601 476L595.500 637L605 716L605.700 773M610 474L618 539L620 593L618 634L608 730L605 774"/>
</g>
<g class="gn"><path d="M497 662Q494 678 463 723Q446 755 438 782L430 789"/></g>
<g class="lm"><path d="M54 780L54 800Q70 807 98 806L210 802.500L251 799.500L291 797.600L293.500 784L56 783M366 636Q352 633 349 642Q346 654 350 656L368 655L367 637L370 668Q369 678 345.600 682M318 710L289 744Q275 769 266 770"/></g>
<g class="gn"><path d="M13.400 802L90 805L390 803L529 800.400L672 800.400M5 811L4.500 831.700L27 836L58 833L224 832.500L394 831L470 835L645 836Q666 835 666 810"/></g>
<g class="mg"><path d="M961 563Q946 563 947 590Q949 611 975 610Q991 609 992 600Q988 591 962 597M927 674L915 720L903 780Q897 814 887 818M663 826L703 824L726 821L1020 820L1053 818L1115 818Q1124 818 1126 814M1113 828.400L1121.600 828.400L1125 849L1121 852.600L906 850.700L780 855.300L753 853.400L653 852.600L327 854L282 857.500L233 857.500L22 856L3.600 852.600L2 834"/></g>
</svg>
<script src="script.js"></script>
</body>
</html>
```
FILE: styles.css
```css
*{box-sizing:border-box}
body{margin:0;width:1920px;height:1080px;overflow:hidden;display:flex;flex-direction:column;background:#ebecf0;font-family:"Open Sans","Noto Sans",sans-serif;font-size:14px;letter-spacing:-.2px;color:#222;position:relative}
i{font-style:normal}
svg{display:block;flex:none;overflow:visible}
.defs{position:absolute}
a,span,label,.hist{white-space:nowrap}

.title{height:28px;background:#fff;display:flex;align-items:center;color:#000}
.logo{width:20px;height:20px;margin-left:2px}
.cap{margin-left:5px;flex:1;letter-spacing:.17px}
.wc{width:160px;height:28px;margin-right:11px}

.menu{height:25px;background:#fff;display:flex;align-items:center;padding:1px 0 0 8px;color:#111;letter-spacing:-.15px}
.menu a{flex:none}
.menu a:nth-child(1){width:36px}
.menu a:nth-child(2){width:40px}
.menu a:nth-child(3){width:46px}
.menu a:nth-child(4){width:51px}
.menu a:nth-child(5){width:63px}
.menu a:nth-child(6){width:50px}
.menu a:nth-child(7){width:48px}
.menu a:nth-child(8){width:49px}
.menu a:nth-child(9){width:85px}
.menu a:nth-child(10){width:80px}
.menu a:nth-child(11){width:49px}
.menu a:nth-child(12){width:66px}
.menu a:nth-child(13){width:61px}
.menu a:nth-child(14){width:55px}

.cmd{height:75px;padding:4px 4px 0 8px;display:flex;flex-direction:column;color:#111}
.hist{height:48px;background:#fff;border-bottom:1px solid #b9c0d5;padding:1px 2px 0;letter-spacing:.15px}
.prompt{height:23px;background:#fff;display:flex;align-items:center;padding-left:2px}
.prompt b{font-size:14px;letter-spacing:-.2px;margin-top:-3px}
.caret{width:1px;height:19px;background:#000;margin-left:5px}
.spin{margin-left:auto;display:flex;flex-direction:column}
.spin i{width:15px;height:11px;background:#eee;border:1px solid #aaa;font:8px/9px "DejaVu Sans",sans-serif;text-align:center}

.tabs{height:32px;display:flex;align-items:stretch;color:#444;box-shadow:inset 0 4px #ebecf0,inset 0 5px #d4d8e2}
.tabs a{flex:none;border-bottom:1px solid #bcc4d8;padding-top:11px;padding-left:14px;letter-spacing:-.06px}
.tabs a.on{width:99px;border-bottom:0;border-right:1px solid #bcc4d8;padding-left:23px}
.tabs a:nth-child(2){width:82px}
.tabs a:nth-child(3){width:87px}
.tabs a:nth-child(4){width:79px}
.tabs a:nth-child(5){width:69px}
.tabs a:nth-child(6){width:139px}
.tabs a:nth-child(7){width:85px}
.tabs a:nth-child(8){width:96px}
.tabs a:nth-child(9){width:106px}
.tabs a:nth-child(10){width:119px}
.tabs a:nth-child(11){width:102px}
.tabs a:nth-child(12){width:105px}
.tabs a:nth-child(13){width:104px}
.tabs a:nth-child(14){width:117px}
.tabs a:nth-child(15){width:85px}
.tabs a:nth-child(16){flex:1}
.tg{width:16px;height:16px;margin:13px 1px 0 0}

.bar{height:47px;display:flex;padding:1px 0 0 9px}
.bar i,.side i{width:28.040px;height:28px;display:flex;align-items:center;justify-content:center;flex:none;position:relative}
.bar svg{width:20px;height:20px}
.m::after{content:"";position:absolute;right:-1px;bottom:0;border:solid transparent;border-width:0 0 6px 6px;border-bottom-color:#777}

.work{height:786px;display:flex}
.side{width:66px;height:751px;padding:8px 8px 0 0;display:grid;grid-template-columns:28px 28px;grid-auto-rows:28.060px;align-content:start;border-right:2px solid #d4dbe8}
.side svg{width:20px;height:20px}
.mid{width:1362px;display:flex;flex-direction:column}
.views{display:grid;grid-template-columns:679px 679px;grid-template-rows:374px 372px;gap:5px 4px;background:#eef0f5}
.vp{position:relative;overflow:hidden;background:#9da3ab}
.vp svg{position:absolute;inset:0;width:100%;height:100%}
.grid path{fill:none}
.mn{stroke:#959ba3;stroke-width:1}
.mj{stroke:#81878f;stroke-width:1.200}
.rd{stroke:#924c50;stroke-width:1.800}
.gr{stroke:#479a48;stroke-width:1.800}
.persp .mn{stroke:#959ba3;stroke-width:.8}
.persp .mj{stroke-width:1.100}
.mark path{fill:none;stroke:#666a70;stroke-width:1}
.mark text{font-size:16px;fill:#5c6066}
.lab{position:absolute;left:0;top:0;height:24px;padding:1px 0 0 9px;background:#c9ccd2;border-radius:0 0 3px 0;font-weight:700;line-height:22px;color:#666;display:flex;justify-content:space-between;letter-spacing:-.2px}
.lab.p{left:1px}
.top{width:57px}
.persp-lab{width:113px}
.front{width:69px}
.act{width:69px}
.lab i{width:13px;border-left:1px solid #666;height:21px;font:9px/21px "DejaVu Sans",sans-serif;text-align:center}
.lab.act{background:#869eec;color:#222}

.vtabs{height:35px;display:flex;align-items:flex-start;padding-left:12px;line-height:32px;letter-spacing:-.1px}
.vtabs a{flex:none}
.vtabs a:nth-child(1){width:96px}
.vtabs a:nth-child(2){width:48px}
.vtabs a:nth-child(3){width:55px}
.vtabs a:nth-child(5){width:43px}
.vtabs .sl{width:12px;height:24px;margin-left:-12px}
.vtabs .plus{border-left:1px solid #c0c6d4;height:30px;padding:10px 0 0 15px}
.plus svg{width:12px;height:12px}

.panel{flex:1;padding:2px 3px 9px 10px;display:flex;flex-direction:column}
.ph{height:22px;display:flex;align-items:center;padding-left:3px;color:#333}
.ph i{flex:1;margin-left:7px;height:3px;border:solid #c9cfdf;border-width:1px 0}
.pt{height:28px;display:flex;align-items:flex-end;border-bottom:1px solid #bcc4d8}
.pt b{width:43.900px;height:27px;display:flex;align-items:center;justify-content:center;flex:none;padding:3px 3px 0 0}
.pt b svg{width:18px;height:18px}
.pt b.on{border:1px solid #bcc4d8;border-bottom:0;background:#ebecf0;height:28px;margin-bottom:-1px}
.pg{width:18px;height:18px;margin:0 0 2px auto}
.pb{flex:1;border:1px solid #bcc4d8;border-top:0;display:flex;flex-direction:column}
.tools{height:43px;display:flex;align-items:center;gap:10px;padding:1px 0 0 6px}
.tools svg{width:18px;height:18px}
.search{height:29px;background:#fff;border:1px solid #dde;margin-left:1px;padding:4px;color:#666;line-height:20px}
.list{flex:1;background:#fff;margin-top:7px;display:flex;font:13px/29px "Liberation Sans",sans-serif;letter-spacing:0}
.list span{height:29px;border-right:1px solid #dde0e8;padding-left:6px}
.c1{width:48px}
.c2{width:34px}

.osnap{height:27px;display:flex;align-items:center;padding:1px 0 0 12px}
.osnap label{display:flex;align-items:center;flex:none}
.osnap label:nth-child(1){width:53px}
.osnap label:nth-child(2){width:60px}
.osnap label:nth-child(3){width:62px}
.osnap label:nth-child(4){width:54px}
.osnap label:nth-child(5){width:53px}
.osnap label:nth-child(6){width:45px}
.osnap label:nth-child(7){width:58px}
.osnap label:nth-child(8){width:52px}
.osnap label:nth-child(9){width:64px}
.osnap label:nth-child(10){width:59px}
.osnap label:nth-child(11){width:71px}
.osnap label:nth-child(12){width:84px}
.osnap i{width:16px;height:16px;border:1px solid #333;background:#fff;margin-right:3px;position:relative}
.osnap i.dis{background:#d9dadc;border-color:#b5b5b5}
.ok::after{content:"";position:absolute;left:4px;top:0;width:5px;height:10px;border:solid #111;border-width:0 1.500px 1.500px 0;transform:rotate(40deg)}

.status{height:22px;border-top:1px solid #c0c6da;display:flex;line-height:23px}
.status span{flex:none;width:108px;border-right:1px solid #c0c6da;text-align:center}
.status span:nth-child(1){width:60px}
.status span:nth-child(7){width:81px}
.status span:nth-child(8){width:54px}
.status span:nth-child(9){width:57px}
.status span:nth-child(10){width:58px}
.status span:nth-child(11){width:90px}
.status span:nth-child(12){width:72px}
.status span:nth-child(13){width:114px}
.status span:nth-child(14){width:49px}
.status .def{width:208px;text-align:left;display:flex;align-items:center;padding-left:5px}
.def i{width:13px;height:13px;background:#000;margin-right:4px}
.status .hi{background:#cfd8ee;font-weight:700;letter-spacing:-.5px}
.status .cpu{border:0;width:96px}

.task{height:38px;background:#101010;display:flex;align-items:center;color:#fff}
.start{width:20px;height:20px;margin-left:12px}
.apps{display:flex;margin-left:357px;height:38px}
.apps i{width:46.100px;height:38px;display:flex;align-items:center;justify-content:center;position:relative;flex:none}
.apps svg{width:20px;height:20px}
.apps text{fill:#fff}
.pc{font-size:10px;font-weight:700}
.six{font-size:10px}
.serif{font:13px "Liberation Serif",serif}
.big{font:700 19px "Liberation Sans",sans-serif}
.apps .r{fill:#2c63b0}
.apps .a{fill:#c02626}
.run::after{content:"";position:absolute;left:6px;right:5px;bottom:0;height:3px;background:#76b9ed}
.two::after{border-right:10px solid #4b7ca3}
.cur{background:#333}
.cur::after{left:0;right:0}
.tray{width:456px;margin:0 1px 0 auto;display:flex;align-items:center;gap:10px;height:38px}
.tray svg{width:20px;height:20px}
.lang{width:35px;margin-left:3px}
.time{width:48px}
.nt{margin-left:-5px}
.desk{width:1px;height:38px;background:#555;margin-left:14px}

.ink{position:absolute;left:0;top:0;width:1920px;height:1080px;pointer-events:none}
.ink path{fill:none;stroke-width:5.900;stroke-linecap:round;stroke-linejoin:round}
.mg path{stroke:#b01463}
.or path{stroke:#ff5700}
.gn path{stroke:#048357}
.ye path{stroke:#ffcf05}
.lm path{stroke:#a2e81e}
```
FILE: script.js
```js
// Draws the construction-plane grid of each viewport.
const UNIT = 12.05, EXTENT = 70;

function addPath(svg, cls, d) {
  const p = document.createElementNS('http://www.w3.org/2000/svg', 'path');
  p.setAttribute('class', cls);
  p.setAttribute('d', d);
  svg.appendChild(p);
}

function flatGrid(svg) {
  const v = svg.viewBox.baseVal, ox = +svg.dataset.ox, oy = +svg.dataset.oy;
  const out = { mn: '', mj: '' };
  for (let k = -EXTENT; k <= EXTENT; k++) {
    const c = k % 5 ? 'mn' : 'mj';
    const x = Math.round(ox + k * UNIT) + 0.5, y = Math.round(oy + k * UNIT) + 0.5;
    out[c] += `M${x} ${v.y}V${v.y + v.height}M${v.x} ${y}H${v.x + v.width}`;
  }
  addPath(svg, 'mn', out.mn);
  addPath(svg, 'mj', out.mj);
  const x = Math.round(ox) + 0.5, y = Math.round(oy) + 0.5;
  addPath(svg, 'rd', `M${x} ${y}H${v.x + v.width}`);
  addPath(svg, 'gr', `M${x} ${y}V${v.y}`);
}

// Camera 100 units from the origin, tilted 30 degrees and turned 30 degrees.
const depth = (x, y) => 100 - 0.433 * x + 0.75 * y;
function project(x, y) {
  const d = depth(x, y), f = 777;
  return [1089 + f * (0.866 * x + 0.5 * y) / d, 394.5 - f * (-0.25 * x + 0.433 * y) / d];
}
function segment(a, b) {
  const near = 8, da = depth(...a), db = depth(...b);
  if (da < near && db < near) return '';
  const t = (near - da) / (db - da);
  const cut = [a[0] + (b[0] - a[0]) * t, a[1] + (b[1] - a[1]) * t];
  if (da < near) a = cut;
  if (db < near) b = cut;
  const p = project(...a), q = project(...b);
  return `M${p.map(n => n.toFixed(1))}L${q.map(n => n.toFixed(1))}`;
}
function perspectiveGrid(svg) {
  const out = { mn: '', mj: '' };
  for (let k = -EXTENT; k <= EXTENT; k++) {
    const c = k % 5 ? 'mn' : 'mj';
    out[c] += segment([k, -EXTENT], [k, EXTENT]) + segment([-EXTENT, k], [EXTENT, k]);
  }
  addPath(svg, 'mn', out.mn);
  addPath(svg, 'mj', out.mj);
  addPath(svg, 'rd', segment([0, 0], [EXTENT, 0]));
  addPath(svg, 'gr', segment([0, 0], [0, EXTENT]));
}

document.querySelectorAll('.grid').forEach(s =>
  s.classList.contains('persp') ? perspectiveGrid(s) : flatGrid(s));
```
